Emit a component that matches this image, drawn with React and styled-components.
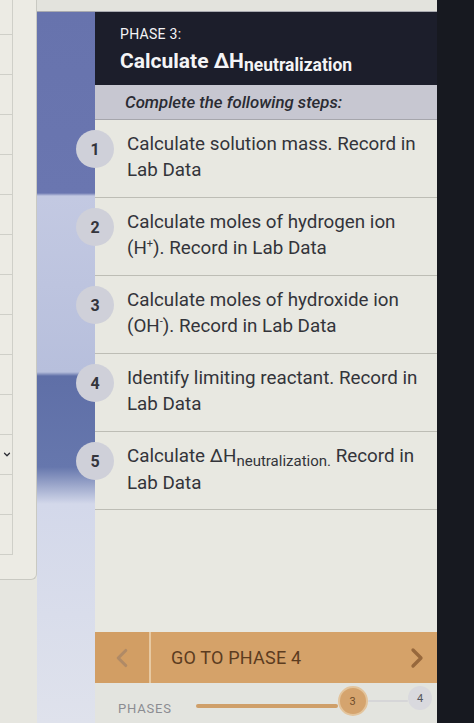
import styled, { createGlobalStyle } from "styled-components";
import { ChevronDown, ChevronLeft, ChevronRight } from "lucide-react";

const GlobalStyle = createGlobalStyle`
  html, body {
    margin: 0;
    padding: 0;
    background: #e6e6e0;
  }
  body {
    font-family: Roboto, "Noto Sans", Arial, sans-serif;
  }
`;

const StepSub = styled.span`
  font-size: 15px;
  position: relative;
  top: 4px;
`;

const TitleSub = styled.span`
  font-size: 17.5px;
  position: relative;
  top: 3px;
`;

const getSteps = () => [
  { n: 1, lines: ["Calculate solution mass. Record in", "Lab Data"] },
  {
    n: 2,
    lines: [
      "Calculate moles of hydrogen ion",
      <>
        (H<sup>+</sup>). Record in Lab Data
      </>,
    ],
  },
  {
    n: 3,
    lines: [
      "Calculate moles of hydroxide ion",
      <>
        (OH<sup>-</sup>). Record in Lab Data
      </>,
    ],
  },
  { n: 4, lines: ["Identify limiting reactant. Record in", "Lab Data"] },
  {
    n: 5,
    lines: [
      <>
        Calculate ΔH<StepSub>neutralization.</StepSub> Record in
      </>,
      "Lab Data",
    ],
  },
];

const App = () => {
  const steps = getSteps();
  return (
    <>
      <GlobalStyle />
      <StyledScreen>
        <StyledTable>
          {Array.from({ length: 14 }).map((_, i) => (
            <StyledTableRow key={i} $first={i === 0}>
              <StyledCell>{i === 11 && <ChevronDown size={11} strokeWidth={3} />}</StyledCell>
            </StyledTableRow>
          ))}
        </StyledTable>

        <StyledMiddle>
          <StyledTopStrip />
          <StyledBody>
            <StyledSidebar />
            <StyledCard>
              <StyledHeader>
                <StyledPhase>PHASE 3:</StyledPhase>
                <StyledTitle>
                  Calculate ΔH<TitleSub>neutralization</TitleSub>
                </StyledTitle>
              </StyledHeader>
              <StyledIntro>Complete the following steps:</StyledIntro>
              {steps.map((step) => (
                <StyledStep key={step.n}>
                  <StyledBadge>{step.n}</StyledBadge>
                  <StyledStepText>
                    {step.lines[0]}
                    <br />
                    {step.lines[1]}
                  </StyledStepText>
                </StyledStep>
              ))}
              <StyledSpacer />
              <StyledNav>
                <StyledNavBack>
                  <ChevronLeft size={30} strokeWidth={2.5} />
                </StyledNavBack>
                <StyledNavLabel>GO TO PHASE 4</StyledNavLabel>
                <StyledNavNext>
                  <ChevronRight size={32} strokeWidth={2.5} />
                </StyledNavNext>
              </StyledNav>
              <StyledPhases>
                <StyledPhasesLabel>PHASES</StyledPhasesLabel>
                <StyledTrack $done />
                <StyledDot $active>3</StyledDot>
                <StyledTrack />
                <StyledDot>4</StyledDot>
              </StyledPhases>
            </StyledCard>
          </StyledBody>
        </StyledMiddle>

        <StyledBezel />
      </StyledScreen>
    </>
  );
};

const StyledScreen = styled.div`
  display: flex;
  width: 474px;
  height: 723px;
  overflow: hidden;
  background: #e6e6e0;
`;

const StyledTable = styled.div`
  width: 37px;
  height: 580px;
  flex-shrink: 0;
  display: flex;
  flex-direction: column;
  background: #ecebe4;
  border-right: 1px solid #c9c9c2;
  border-bottom: 1px solid #c9c9c2;
  border-bottom-right-radius: 6px;
  box-sizing: border-box;
  overflow: hidden;
`;

const StyledTableRow = styled.div`
  height: ${(props) => (props.$first ? "35px" : "40px")};
  flex-shrink: 0;
  display: flex;
`;

const StyledCell = styled.div`
  width: 13px;
  border-right: 1px solid #cfcfc8;
  border-bottom: 1px solid #cfcfc8;
  box-sizing: border-box;
  display: flex;
  align-items: center;
  justify-content: center;
  color: #2a2c34;
  padding-left: 2px;
`;

const StyledMiddle = styled.div`
  flex: 1;
  display: flex;
  flex-direction: column;
`;

const StyledTopStrip = styled.div`
  height: 12px;
  flex-shrink: 0;
  background: #e3e3dd;
  border-bottom: 1px solid #a9aab0;
  box-sizing: border-box;
`;

const StyledBody = styled.div`
  flex: 1;
  display: flex;
`;

const StyledSidebar = styled.div`
  width: 58px;
  flex-shrink: 0;
  background: linear-gradient(
    to bottom,
    #6773ad 0px,
    #6a76b0 181px,
    #c3c9e2 184px,
    #b7bfdc 360px,
    #5f6fa7 364px,
    #6677ad 455px,
    #d3d8ea 492px,
    #dfe2ec 100%
  );
`;

const StyledCard = styled.div`
  width: 342px;
  flex-shrink: 0;
  display: flex;
  flex-direction: column;
  background: #e8e8e1;
`;

const StyledHeader = styled.div`
  height: 73px;
  box-sizing: border-box;
  padding: 14px 0 0 25px;
  background: #1c1e2b;
  color: #f4f4f6;
`;

const StyledPhase = styled.div`
  font-size: 14px;
  letter-spacing: 0.3px;
  line-height: 16px;
`;

const StyledTitle = styled.div`
  margin-top: 6px;
  font-size: 21px;
  font-weight: 700;
  line-height: 26px;
  white-space: nowrap;
`;

const StyledIntro = styled.div`
  height: 35px;
  box-sizing: border-box;
  padding-left: 30px;
  display: flex;
  align-items: center;
  background: #c7c7d1;
  border-bottom: 1px solid #a6a6ac;
  font-size: 16.8px;
  font-style: italic;
  font-weight: 500;
  color: #2a2b33;
`;

const StyledStep = styled.div`
  position: relative;
  height: 78px;
  flex-shrink: 0;
  box-sizing: border-box;
  padding: 11px 0 0 32px;
  border-bottom: 1px solid #bdbdb5;
`;

const StyledBadge = styled.div`
  position: absolute;
  left: -19px;
  top: 10px;
  width: 38px;
  height: 38px;
  border-radius: 50%;
  background: #cfd0d9;
  display: flex;
  align-items: center;
  justify-content: center;
  font-size: 16px;
  font-weight: 700;
  color: #34353c;
`;

const StyledStepText = styled.div`
  font-size: 18.8px;
  line-height: 26px;
  color: #33343a;
  white-space: nowrap;

  & sup {
    font-size: 11px;
    line-height: 0;
  }
`;

const StyledSpacer = styled.div`
  flex: 1;
`;

const StyledNav = styled.div`
  height: 51px;
  flex-shrink: 0;
  display: flex;
  align-items: center;
  background: #d5a269;
`;

const StyledNavBack = styled.div`
  width: 56px;
  height: 100%;
  display: flex;
  align-items: center;
  justify-content: center;
  color: #b08a66;
  border-right: 2px solid #e7c9a2;
  box-sizing: border-box;
  background: #d29e64;
`;

const StyledNavLabel = styled.div`
  flex: 1;
  padding-left: 20px;
  font-size: 18px;
  color: #5c3c1f;
  letter-spacing: 0.2px;
`;

const StyledNavNext = styled.div`
  width: 40px;
  display: flex;
  align-items: center;
  justify-content: center;
  color: #97683c;
`;

const StyledPhases = styled.div`
  height: 40px;
  flex-shrink: 0;
  display: flex;
  align-items: center;
  padding: 0 5px 0 23px;
  background: #e3e4df;
`;

const StyledPhasesLabel = styled.div`
  font-size: 13px;
  letter-spacing: 0.8px;
  color: #8b8c92;
  margin-right: 24px;
  margin-top: 10px;
`;

const StyledTrack = styled.div`
  flex: ${(props) => (props.$done ? "0 0 142px" : "1")};
  height: ${(props) => (props.$done ? "4px" : "2px")};
  border-radius: 2px;
  background: ${(props) => (props.$done ? "#cf9f69" : "#d6d6d8")};
  margin-top: ${(props) => (props.$done ? "6px" : "-4px")};
`;

const StyledDot = styled.div`
  width: ${(props) => (props.$active ? "26px" : "24px")};
  height: ${(props) => (props.$active ? "26px" : "24px")};
  border-radius: 50%;
  flex-shrink: 0;
  display: flex;
  align-items: center;
  justify-content: center;
  font-size: 11px;
  color: ${(props) => (props.$active ? "#6e4b2a" : "#55565c")};
  background: ${(props) => (props.$active ? "#d5a46e" : "#d9d9de")};
  border: ${(props) => (props.$active ? "2px solid #e3c49c" : "none")};
  margin-top: ${(props) => (props.$active ? "-4px" : "-10px")};
`;

const StyledBezel = styled.div`
  width: 37px;
  flex-shrink: 0;
  background: #171920;
`;

export default App;
